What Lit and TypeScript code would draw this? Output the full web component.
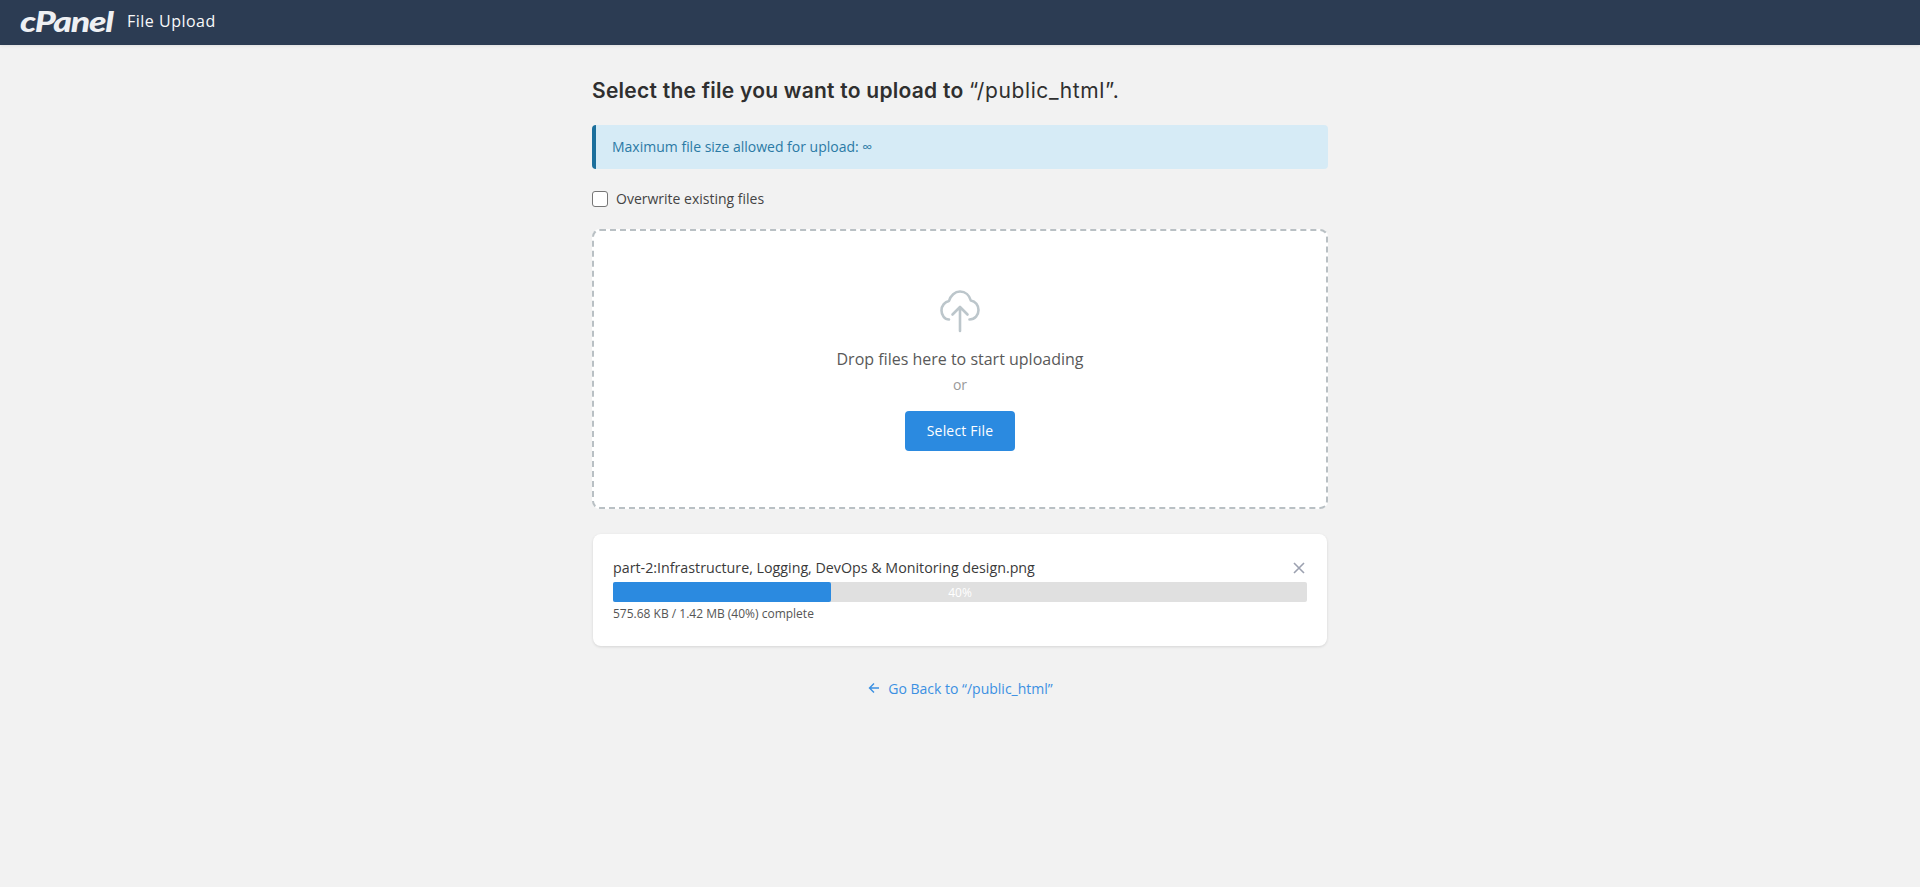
import { LitElement, html, css } from "lit";
import { customElement } from "lit/decorators.js";

@customElement("app-root")
export class AppRoot extends LitElement {
  static styles = css`
    :host { display: block; min-height: 887px; background: #f2f2f2; font-family: "Open Sans", sans-serif; color: #333; }
    * { box-sizing: border-box; }
    .topbar { height: 45px; background: #2c3c53; display: flex; align-items: center; padding: 0 0 3px 20px; box-shadow: 0 1px 3px rgba(0,0,0,.08); }
    .logo { width: 94px; font-family: "Lato", sans-serif; font-style: italic; font-weight: 900; font-size: 29px; letter-spacing: -1px; color: #eef0f3; line-height: 40px; white-space: nowrap; transform: scaleX(1.23); transform-origin: left center; }
    .title { margin-left: 13px; font-size: 16px; letter-spacing: .5px; color: #f8f9fa; }
    main { width: 736px; margin: 0 auto; display: flex; flex-direction: column; }
    h1 { margin: 31px 0 0; height: 30px; font: 600 21px/30px "Inter", sans-serif; letter-spacing: .25px; color: #2f2f2f; white-space: nowrap; }
    h1 span { font-weight: 400; letter-spacing: .6px; }
    .alert { margin-top: 19px; height: 44px; padding: 0 0 2px 16px; background: #d6ebf6; border-left: 4px solid #1b6f9c; border-radius: 4px; display: flex; align-items: center; font-size: 14px; color: #2b7aa5; }
    .check { margin-top: 22px; height: 16px; display: flex; align-items: center; gap: 8px; font-size: 14px; color: #444; }
    .check span:last-child { position: relative; top: -1px; }
    .box { width: 16px; height: 16px; background: #fff; border: 1px solid #767676; border-radius: 3px; }
    .drop { margin-top: 22px; height: 280px; background: #fff; border: 2px dashed #b9c0c4; border-radius: 8px; display: flex; flex-direction: column; align-items: center; padding-top: 59px; }
    .cloud { width: 40px; height: 44px; display: block; }
    .hint { margin-top: 14px; font-size: 16px; line-height: 22px; color: #595959; }
    .or { margin-top: 4px; font-size: 14px; line-height: 22px; color: #9a9a9a; }
    .btn { margin-top: 15px; width: 110px; height: 40px; padding: 0 0 2px; border: 0; border-radius: 4px; background: #2b8ae0; color: #fff; font: 500 14px "Open Sans", sans-serif; letter-spacing: .2px; }
    .card { margin-top: 25px; margin-inline: 1px; height: 112px; background: #fff; border-radius: 8px; box-shadow: 0 1px 3px rgba(0,0,0,.12); padding: 22px 20px 0; }
    .row { display: flex; justify-content: space-between; align-items: center; height: 22px; font-size: 14.25px; color: #3a3a3a; }
    .x { width: 12px; height: 12px; margin: 2px 2px 0 0; display: block; }
    .bar { position: relative; margin-top: 4px; height: 20px; background: #e0e0e0; border-radius: 2px; display: flex; align-items: center; justify-content: center; font-size: 12px; color: #fff; }
    .fill { position: absolute; left: 0; top: 0; bottom: 0; background: #2b8ae0; border-radius: 2px; }
    .meta { margin-top: 2px; font-size: 12px; line-height: 20px; color: #555; }
    .back { margin-top: 31px; height: 22px; padding-left: 1px; display: flex; justify-content: center; align-items: center; gap: 8px; font-size: 14px; color: #3b90e2; text-decoration: none; }
    .back svg { width: 12px; height: 12px; display: block; }
  `;

  render() {
    return html`
      <header class="topbar">
        <span class="logo">cPanel</span>
        <span class="title">File Upload</span>
      </header>
      <main>
        <h1>Select the file you want to upload to <span>“/public_html”.</span></h1>
        <div class="alert">Maximum file size allowed for upload: ∞</div>
        <label class="check"><span class="box"></span><span>Overwrite existing files</span></label>
        <section class="drop">
          <svg class="cloud" viewBox="0 0 40 44" fill="none" stroke="#bcc6cb" stroke-width="2.6" stroke-linecap="round" stroke-linejoin="round">
            <path d="M9 29.5C4.500 29.500 1.500 25 1.500 20.500 1.500 15.500 5 11.800 9 11 10.500 5.500 15 1.500 20 1.500c5.500 0 9.500 4 10.800 9 4.700.7 7.700 5 7.700 9.500 0 5-3.500 9.500-9 9.500" />
            <path d="M20 41V17M12.500 24.500L20 17l7.500 7.500" />
          </svg>
          <div class="hint">Drop files here to start uploading</div>
          <div class="or">or</div>
          <button class="btn">Select File</button>
        </section>
        <section class="card">
          <div class="row">
            <span>part-2:Infrastructure, Logging, DevOps &amp; Monitoring design.png</span>
            <svg class="x" viewBox="0 0 12 12" fill="none" stroke="#9ca1b0" stroke-width="1.6"><path d="M1 1l10 10M11 1L1 11" /></svg>
          </div>
          <div class="bar">
            <div class="fill" style="width: 218px"></div>
            <span>40%</span>
          </div>
          <div class="meta">575.68 KB / 1.42 MB (40%) complete</div>
        </section>
        <a class="back" href="#">
          <svg viewBox="0 0 12 12" fill="none" stroke="currentColor" stroke-width="1.4"><path d="M11 6H1.500M6 1.500L1.500 6 6 10.500" /></svg>
          Go Back to “/public_html”
        </a>
      </main>
    `;
  }
}
